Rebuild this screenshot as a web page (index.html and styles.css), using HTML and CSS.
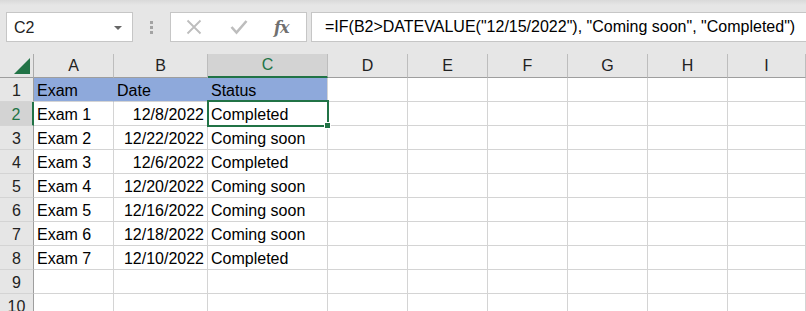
FILE: index.html
```html
<!DOCTYPE html>
<html>
<head>
<meta charset="utf-8">
<link rel="stylesheet" href="styles.css">
</head>
<body>
<div class="toolbar">
  <div class="namebox"><span class="ref">C2</span><span class="arrow"></span></div>
  <div class="grip"><i></i><i></i><i></i></div>
  <div class="fxbox">
    <svg class="ico" width="16" height="16" viewBox="0 0 16 16"><path d="M1.5 1.5 L14.5 14.5 M14.5 1.5 L1.5 14.5" stroke="#bdbdbd" stroke-width="1.8" fill="none"/></svg>
    <svg class="ico" width="18" height="16" viewBox="0 0 18 16"><path d="M1.5 8 L6.5 13.5 L16.5 2" stroke="#bdbdbd" stroke-width="2.6" fill="none"/></svg>
    <span class="fx">fx</span>
  </div>
  <div class="formula">=IF(B2&gt;DATEVALUE("12/15/2022"), "Coming soon", "Completed")</div>
</div>
<div class="sheet">
  <div class="grid">
    <div class="corner"><span class="tri"></span></div>
    <div class="ch">A</div><div class="ch">B</div><div class="ch sel">C</div><div class="ch">D</div><div class="ch">E</div><div class="ch">F</div><div class="ch">G</div><div class="ch">H</div><div class="ch">I</div>

    <div class="rh">1</div><div class="c hd">Exam</div><div class="c hd">Date</div><div class="c hd">Status</div><div class="c"></div><div class="c"></div><div class="c"></div><div class="c"></div><div class="c"></div><div class="c"></div>
    <div class="rh sel">2</div><div class="c">Exam 1</div><div class="c r">12/8/2022</div><div class="c">Completed</div><div class="c"></div><div class="c"></div><div class="c"></div><div class="c"></div><div class="c"></div><div class="c"></div>
    <div class="rh">3</div><div class="c">Exam 2</div><div class="c r">12/22/2022</div><div class="c">Coming soon</div><div class="c"></div><div class="c"></div><div class="c"></div><div class="c"></div><div class="c"></div><div class="c"></div>
    <div class="rh">4</div><div class="c">Exam 3</div><div class="c r">12/6/2022</div><div class="c">Completed</div><div class="c"></div><div class="c"></div><div class="c"></div><div class="c"></div><div class="c"></div><div class="c"></div>
    <div class="rh">5</div><div class="c">Exam 4</div><div class="c r">12/20/2022</div><div class="c">Coming soon</div><div class="c"></div><div class="c"></div><div class="c"></div><div class="c"></div><div class="c"></div><div class="c"></div>
    <div class="rh">6</div><div class="c">Exam 5</div><div class="c r">12/16/2022</div><div class="c">Coming soon</div><div class="c"></div><div class="c"></div><div class="c"></div><div class="c"></div><div class="c"></div><div class="c"></div>
    <div class="rh">7</div><div class="c">Exam 6</div><div class="c r">12/18/2022</div><div class="c">Coming soon</div><div class="c"></div><div class="c"></div><div class="c"></div><div class="c"></div><div class="c"></div><div class="c"></div>
    <div class="rh">8</div><div class="c">Exam 7</div><div class="c r">12/10/2022</div><div class="c">Completed</div><div class="c"></div><div class="c"></div><div class="c"></div><div class="c"></div><div class="c"></div><div class="c"></div>
    <div class="rh">9</div><div class="c"></div><div class="c"></div><div class="c"></div><div class="c"></div><div class="c"></div><div class="c"></div><div class="c"></div><div class="c"></div><div class="c"></div>
    <div class="rh">10</div><div class="c"></div><div class="c"></div><div class="c"></div><div class="c"></div><div class="c"></div><div class="c"></div><div class="c"></div><div class="c"></div><div class="c"></div>
  </div>
  <div class="selection"><span class="handle"></span></div>
</div>
</body>
</html>
```

FILE: styles.css
```css
* { box-sizing: border-box; }
html, body { margin: 0; padding: 0; }
body {
  width: 806px;
  height: 311px;
  overflow: hidden;
  background: #ffffff;
  font-family: "Liberation Sans", Arial, sans-serif;
  color: #000;
}
.toolbar {
  height: 54px;
  background: linear-gradient(#d9d9d9 0px, #e6e6e6 5px, #e6e6e6 100%);
  display: flex;
  align-items: flex-start;
  padding-top: 12px;
  padding-left: 6px;
  white-space: nowrap;
}
.namebox {
  width: 127px;
  height: 30px;
  background: #fff;
  border: 1px solid #c6c6c6;
  display: flex;
  align-items: center;
  justify-content: space-between;
  padding: 0 10px 0 7px;
  font-size: 16px;
  color: #222;
}
.namebox .ref { padding-top: 1px; }
.arrow {
  width: 0; height: 0;
  border-left: 4px solid transparent;
  border-right: 4px solid transparent;
  border-top: 4px solid #666;
  margin-top: 1px;
}
.grip {
  width: 37px;
  height: 30px;
  display: flex;
  flex-direction: column;
  align-items: center;
  justify-content: center;
  gap: 2px;
}
.grip i {
  display: block;
  width: 3px;
  height: 3px;
  background: #a3a3a3;
}
.fxbox {
  width: 137px;
  height: 30px;
  background: #fff;
  border: 1px solid #c6c6c6;
  display: flex;
  align-items: center;
  padding-left: 15px;
  gap: 0;
}
.fxbox .ico:first-child { margin-right: 28px; }
.fxbox .ico:nth-child(2) { margin-right: 26px; }
.fx {
  font-family: "DejaVu Serif", "Liberation Serif", serif;
  font-style: italic;
  font-weight: bold;
  font-size: 16px;
  color: #707070;
  letter-spacing: -1px;
}
.formula {
  margin-left: 4px;
  flex: 1;
  height: 30px;
  background: #fff;
  border: 1px solid #c6c6c6;
  border-right: none;
  font-size: 16px;
  line-height: 28px;
  padding-left: 13px;
  color: #000;
}
.sheet { position: relative; }
.grid {
  display: grid;
  grid-template-columns: 34px 80px 94px 120px 80px 80px 80px 80px 80px 78px;
  grid-auto-rows: 24px;
  font-size: 16px;
}
.corner {
  background: #e6e6e6;
  border-right: 1px solid #ababab;
  border-bottom: 1px solid #9e9e9e;
  position: relative;
}
.tri {
  position: absolute;
  right: 3px;
  bottom: 3px;
  width: 0; height: 0;
  border-left: 16px solid transparent;
  border-bottom: 16px solid #217346;
}
.ch {
  background: #e6e6e6;
  border-right: 1px solid #bdbdbd;
  border-bottom: 1px solid #9e9e9e;
  text-align: center;
  line-height: 23px;
  color: #222;
}
.ch.sel {
  background: #d3d3d3;
  color: #217346;
  border-bottom: 2px solid #217346;
  line-height: 22px;
}
.rh {
  background: #e6e6e6;
  border-right: 1px solid #9e9e9e;
  border-bottom: 1px solid #d4d4d4;
  text-align: center;
  line-height: 25px;
  color: #222;
}
.rh.sel {
  background: #d3d3d3;
  color: #217346;
  border-right: 2px solid #217346;
}
.c {
  border-right: 1px solid #d4d4d4;
  border-bottom: 1px solid #d4d4d4;
  line-height: 25px;
  padding: 0 3px 0 3px;
  white-space: nowrap;
  overflow: visible;
}
.c.r { text-align: right; padding-right: 3px; }
.c.hd {
  background: #8ea9db;
  border-right-color: #8ea9db;
}
.c.hd + .c.hd + .c.hd { border-right-color: #d4d4d4; }
.selection {
  position: absolute;
  left: 207px;
  top: 46px;
  width: 122px;
  height: 27px;
  border: 2px solid #217346;
  pointer-events: none;
}
.handle {
  position: absolute;
  right: -4px;
  bottom: -4px;
  width: 7px;
  height: 7px;
  background: #217346;
  border: 1px solid #fff;
}
```
